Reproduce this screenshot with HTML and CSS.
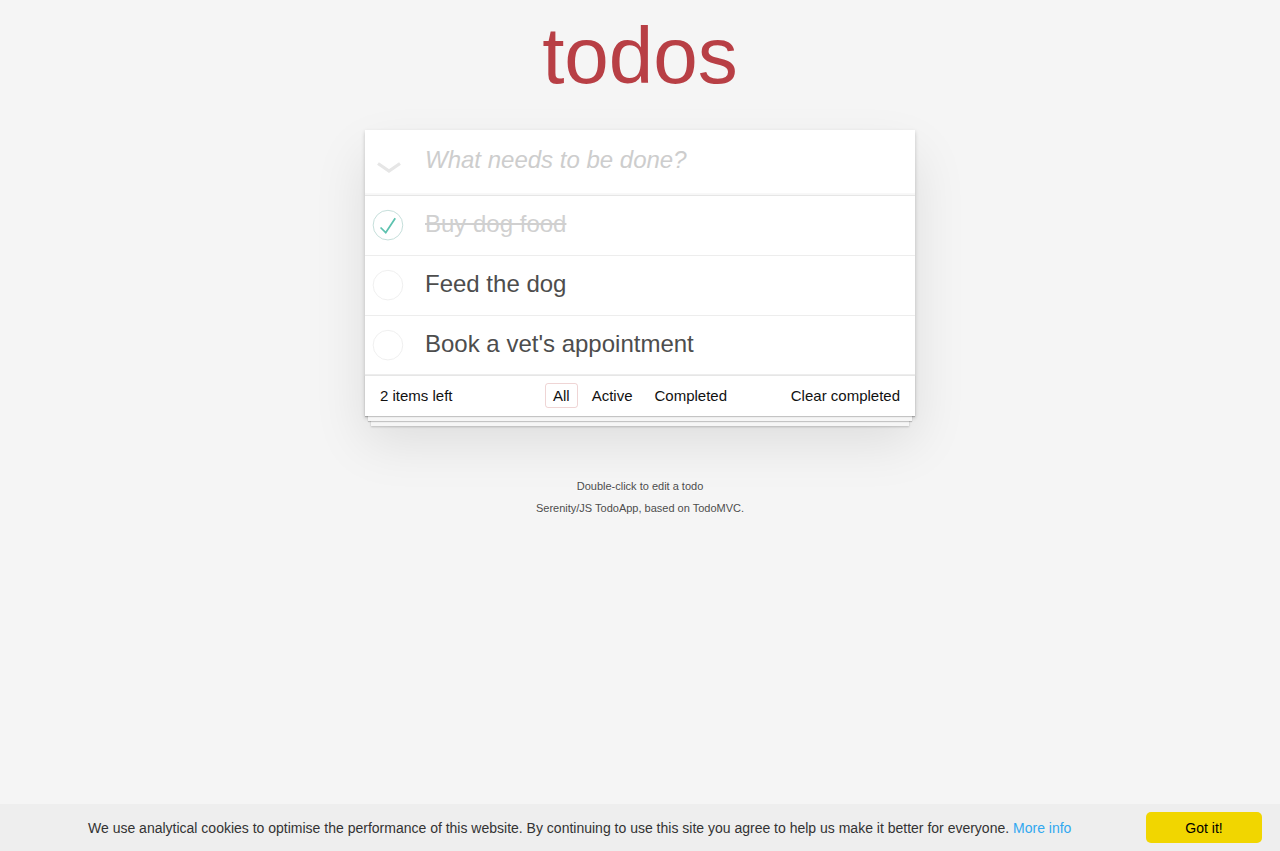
FILE: index.html
```html
<!DOCTYPE html>
<html lang="en">
<head>
<meta charset="utf-8">
<title>Serenity/JS TodoApp</title>
<link rel="stylesheet" href="styles.css">
</head>
<body>
<div class="page">
  <h1 class="title">todos</h1>
  <section class="todoapp">
    <header class="new-row">
      <div class="toggle-all">
        <svg class="chevron" width="24" height="11" viewBox="0 0 24 11"><path d="M1 1.5 L12 9 L23 1.5" fill="none" stroke="#e6e6e6" stroke-width="3.2" stroke-linejoin="miter"/></svg>
      </div>
      <input class="new-todo" type="text" placeholder="What needs to be done?">
    </header>
    <section class="main">
      <ul class="todo-list">
        <li class="todo completed">
          <svg class="toggle" width="40" height="40" viewBox="-10 -18 100 135"><circle cx="50" cy="50" r="50" fill="none" stroke="#bddad5" stroke-width="3"/><path fill="#5dc2af" d="M72 25L42 71 27 56l-4 4 20 20 34-52z"/></svg>
          <label class="todo-label">Buy dog food</label>
        </li>
        <li class="todo">
          <svg class="toggle" width="40" height="40" viewBox="-10 -18 100 135"><circle cx="50" cy="50" r="50" fill="none" stroke="#ededed" stroke-width="3"/></svg>
          <label class="todo-label">Feed the dog</label>
        </li>
        <li class="todo">
          <svg class="toggle" width="40" height="40" viewBox="-10 -18 100 135"><circle cx="50" cy="50" r="50" fill="none" stroke="#ededed" stroke-width="3"/></svg>
          <label class="todo-label">Book a vet's appointment</label>
        </li>
      </ul>
    </section>
    <footer class="footer">
      <span class="todo-count"><strong class="count-num">2</strong> items left</span>
      <ul class="filters"><li class="filter-item"><a class="filter selected" href="#/">All</a></li><li class="filter-item"><a class="filter" href="#/active">Active</a></li><li class="filter-item"><a class="filter" href="#/completed">Completed</a></li></ul>
      <button class="clear-completed">Clear completed</button>
    </footer>
  </section>
  <footer class="info">
    <p class="info-line">Double-click to edit a todo</p>
    <p class="info-line">Serenity/JS TodoApp, based on TodoMVC.</p>
  </footer>
</div>
<div class="cookie-bar">
  <p class="cookie-msg">We use analytical cookies to optimise the performance of this website. By continuing to use this site you agree to help us make it better for everyone. <a class="cookie-link" href="#">More info</a></p>
  <button class="cookie-btn">Got it!</button>
</div>
</body>
</html>
```
FILE: styles.css
```css
html, body {
  margin: 0;
  padding: 0;
}
body {
  font: 14px "Liberation Sans", Arial, sans-serif;
  line-height: 19.6px;
  background: #f5f5f5;
  color: #111111;
}
.page {
  max-width: 550px;
  margin: 0 auto;
}
.title {
  margin: 0;
  height: 130px;
  line-height: 112px;
  font-size: 80px;
  font-weight: 400;
  text-align: center;
  color: #b83f45;
}
.todoapp {
  position: relative;
  z-index: 0;
  background: #fff;
  margin: 0 0 65px 0;
  box-shadow: 0 2px 4px 0 rgba(0, 0, 0, 0.2), 0 25px 50px 0 rgba(0, 0, 0, 0.1);
}
.new-row {
  display: flex;
  height: 65px;
  background: #fff;
  box-shadow: inset 0 -2px 1px rgba(0, 0, 0, 0.03);
}
.toggle-all {
  width: 60px;
  flex: none;
  display: flex;
  align-items: center;
  padding-top: 9px;
  box-sizing: border-box;
}
.chevron {
  display: block;
  margin-left: 12px;
}
.new-todo {
  flex: 1;
  min-width: 0;
  margin: 0;
  border: none;
  padding: 13px 16px 19px 0;
  font: 24px "Liberation Sans", Arial, sans-serif;
  line-height: 33px;
  color: #4d4d4d;
  background: transparent;
  outline: none;
}
.new-todo::placeholder {
  font-style: italic;
  color: #cdcdcd;
}
.main {
  border-top: 1px solid #e6e6e6;
}
.todo-list {
  margin: 0;
  padding: 0;
  list-style: none;
}
.todo {
  display: flex;
  align-items: center;
  font-size: 24px;
  border-bottom: 1px solid #ededed;
}
.toggle {
  flex: none;
  display: block;
}
.todo-label {
  display: block;
  flex: 1;
  padding: 14px 15px 16px 20px;
  line-height: 1.2;
  color: #4d4d4d;
  word-break: break-all;
}
.completed .todo-label {
  color: #d0d0d0;
  text-decoration: line-through;
}
.footer {
  position: relative;
  display: grid;
  grid-template-columns: 1fr auto 1fr;
  align-items: start;
  height: 20px;
  padding: 10px 15px;
  font-size: 15px;
  line-height: 19.6px;
  border-top: 1px solid #e6e6e6;
  background: #fff;
}
.footer::before {
  content: "";
  position: absolute;
  left: 0;
  right: 0;
  bottom: 0;
  height: 41px;
  z-index: -1;
  box-shadow: 0 1px 1px rgba(0, 0, 0, 0.2), 0 8px 0 -3px #f6f6f6, 0 9px 1px -3px rgba(0, 0, 0, 0.2), 0 16px 0 -6px #f6f6f6, 0 17px 2px -6px rgba(0, 0, 0, 0.2);
}
.todo-count {
  justify-self: start;
}
.count-num {
  font-weight: 400;
}
.filters {
  display: block;
  margin: 0;
  padding: 0;
  list-style: none;
  white-space: nowrap;
}
.filter-item {
  display: inline;
}
.filter {
  margin: 3px;
  padding: 3px 7px;
  color: inherit;
  text-decoration: none;
  border: 1px solid transparent;
  border-radius: 3px;
}
.filter.selected {
  border-color: rgba(175, 47, 47, 0.2);
}
.clear-completed {
  justify-self: end;
  margin: 0;
  padding: 0;
  border: 0;
  background: none;
  font: inherit;
  color: inherit;
  line-height: 19.6px;
  cursor: pointer;
}
.info {
  color: #4d4d4d;
  font-size: 11px;
  text-align: center;
  text-shadow: 0 1px 0 rgba(255, 255, 255, 0.5);
}
.info-line {
  margin: 0 0 11px 0;
  line-height: 1;
}
.cookie-bar {
  position: fixed;
  left: 0;
  right: 0;
  bottom: 0;
  height: 47px;
  box-sizing: border-box;
  display: flex;
  align-items: center;
  justify-content: space-between;
  padding: 0 18px 0 88px;
  background: #eeeeee;
  color: #333;
  font-family: "Liberation Sans", Arial, sans-serif;
}
.cookie-msg {
  margin: 0;
  padding-top: 2px;
  font-size: 14px;
  line-height: 21px;
}
.cookie-link {
  color: #31a8f0;
  text-decoration: none;
}
.cookie-btn {
  width: 116px;
  height: 31px;
  margin: 0;
  padding: 0;
  border: 0;
  border-radius: 5px;
  background: #f1d600;
  color: #000;
  font: 14px "Liberation Sans", Arial, sans-serif;
  cursor: pointer;
}
```
